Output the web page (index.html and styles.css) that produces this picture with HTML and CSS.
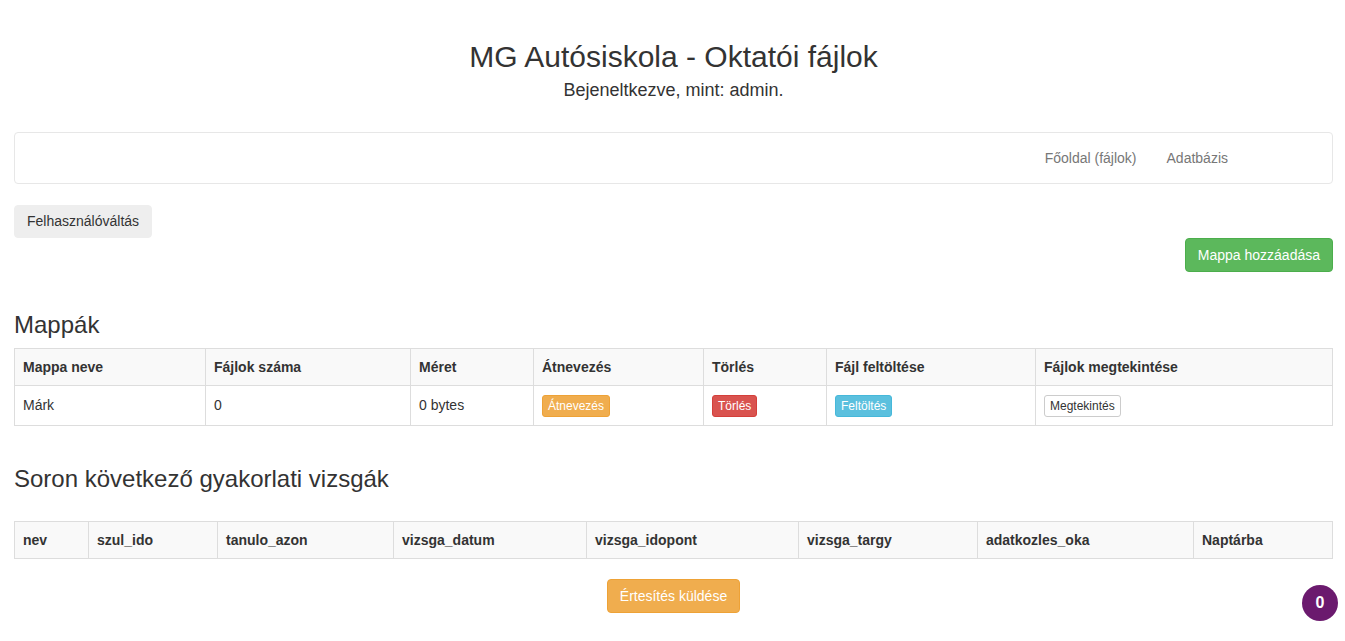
FILE: index.html
```html
<!DOCTYPE html>
<html lang="hu">
<head>
<meta charset="utf-8">
<title>MG Autósiskola - Oktatói fájlok</title>
<link rel="stylesheet" href="styles.css">
</head>
<body>
<div class="page">
  <header class="head">
    <h1 class="title">MG Autósiskola - Oktatói fájlok</h1>
    <p class="subtitle">Bejeneltkezve, mint: admin.</p>
  </header>

  <nav class="navbar">
    <ul class="nav-links">
      <li><a href="#">Főoldal (fájlok)</a></li>
      <li><a href="#">Adatbázis</a></li>
    </ul>
  </nav>

  <div class="actions">
    <div><button class="btn btn-light">Felhasználóváltás</button></div>
    <div class="actions-right"><button class="btn btn-success">Mappa hozzáadása</button></div>
  </div>

  <h3 class="section-title first">Mappák</h3>
  <table class="grid">
    <colgroup>
      <col style="width:191px"><col style="width:205px"><col style="width:123px"><col style="width:170px"><col style="width:123px"><col style="width:209px"><col>
    </colgroup>
    <thead>
      <tr><th>Mappa neve</th><th>Fájlok száma</th><th>Méret</th><th>Átnevezés</th><th>Törlés</th><th>Fájl feltöltése</th><th>Fájlok megtekintése</th></tr>
    </thead>
    <tbody>
      <tr>
        <td>Márk</td><td>0</td><td>0 bytes</td>
        <td><button class="btn-xs xs-warning">Átnevezés</button></td>
        <td><button class="btn-xs xs-danger">Törlés</button></td>
        <td><button class="btn-xs xs-info">Feltöltés</button></td>
        <td><button class="btn-xs xs-default">Megtekintés</button></td>
      </tr>
    </tbody>
  </table>

  <h3 class="section-title second">Soron következő gyakorlati vizsgák</h3>
  <table class="grid exams">
    <colgroup>
      <col style="width:74px"><col style="width:129px"><col style="width:176px"><col style="width:193px"><col style="width:212px"><col style="width:179px"><col style="width:216px"><col>
    </colgroup>
    <thead>
      <tr><th>nev</th><th>szul_ido</th><th>tanulo_azon</th><th>vizsga_datum</th><th>vizsga_idopont</th><th>vizsga_targy</th><th>adatkozles_oka</th><th>Naptárba</th></tr>
    </thead>
  </table>

  <div class="center">
    <button class="btn btn-warning">Értesítés küldése</button>
  </div>
</div>
<div class="badge-float">0</div>
</body>
</html>
```

FILE: styles.css
```css
* { box-sizing: border-box; }
html, body { margin: 0; padding: 0; }
body {
  font-family: "Liberation Sans", Arial, Helvetica, sans-serif;
  font-size: 14px;
  line-height: 20px;
  color: #333;
  background: #fff;
}
.page { padding: 0 12px 0 14px; }

.head { text-align: center; padding-top: 40px; }
.title {
  margin: 0;
  font-size: 30px;
  font-weight: 500;
  line-height: 33px;
}
.subtitle {
  margin: 6px 0 0;
  font-size: 18px;
  line-height: 22px;
}

.navbar {
  margin-top: 31px;
  height: 52px;
  border: 1px solid #e7e7e7;
  border-radius: 4px;
  background: #fff;
  display: flex;
  justify-content: flex-end;
}
.nav-links {
  list-style: none;
  margin: 0;
  padding: 0 89px 0 0;
  display: flex;
}
.nav-links a {
  display: block;
  padding: 15px;
  line-height: 20px;
  color: #777;
  text-decoration: none;
}

.actions { margin-top: 21px; }
.actions-right { display: flex; justify-content: flex-end; }

.btn {
  font-family: inherit;
  font-size: 14px;
  line-height: 20px;
  padding: 6px 12px;
  border: 1px solid transparent;
  border-radius: 4px;
  cursor: pointer;
  display: inline-block;
}
.btn-light { background: #eee; border-color: #eee; color: #333; height: 33px; padding-top: 5px; }
.btn-success { background: #5cb85c; border-color: #4cae4c; color: #fff; }
.btn-warning { background: #f0ad4e; border-color: #eea236; color: #fff; }

.section-title {
  margin: 0;
  font-size: 24px;
  font-weight: 500;
  line-height: 26px;
}
.section-title.first { margin-top: 40px; }
.section-title.second { margin-top: 40px; }

.grid {
  width: 100%;
  border-collapse: collapse;
  border: 1px solid #ddd;
  margin-top: 10px;
  table-layout: fixed;
}
.grid th, .grid td {
  border: 1px solid #ddd;
  padding: 8px;
  text-align: left;
  vertical-align: top;
  line-height: 20px;
}
.grid thead tr { background: #f9f9f9; }
.grid th { font-weight: bold; }
.grid td { padding-top: 9px; padding-bottom: 8px; }
.exams { margin-top: 29px; }

.btn-xs {
  font-family: inherit;
  font-size: 12px;
  line-height: 18px;
  padding: 1px 5px;
  border: 1px solid transparent;
  border-radius: 3px;
  color: #fff;
  display: inline-block;
  vertical-align: middle;
}
.xs-warning { background: #f0ad4e; border-color: #eea236; }
.xs-danger { background: #d9534f; border-color: #d43f3a; }
.xs-info { background: #5bc0de; border-color: #46b8da; }
.xs-default { background: #fff; border-color: #ccc; color: #333; }

.center { text-align: center; margin-top: 20px; }

.badge-float {
  position: fixed;
  right: 7px;
  bottom: 20px;
  width: 36px;
  height: 36px;
  border-radius: 50%;
  background: #6b1a6e;
  color: #fff;
  font-weight: bold;
  font-size: 16px;
  display: flex;
  align-items: center;
  justify-content: center;
}
```
